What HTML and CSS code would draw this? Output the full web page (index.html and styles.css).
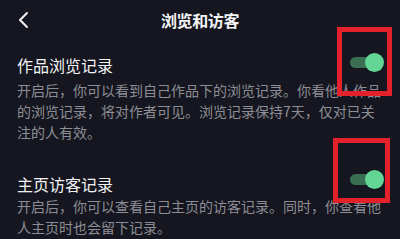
FILE: index.html
```html
<!DOCTYPE html>
<html lang="zh-CN">
<head>
<meta charset="utf-8">
<title>浏览和访客</title>
<link rel="stylesheet" href="styles.css">
</head>
<body>
<div class="page">
  <header class="header">
    <svg class="back" width="12" height="18" viewBox="0 0 12 18"><path d="M10 2 L3 9 L10 16" fill="none" stroke="#f2f2f2" stroke-width="2" stroke-linecap="round" stroke-linejoin="round"/></svg>
    <div class="title">浏览和访客</div>
    <div class="spacer"></div>
  </header>
  <section class="section first">
    <div class="row">
      <div class="label">作品浏览记录</div>
      <div class="toggle"><span class="track"></span><span class="knob"></span></div>
    </div>
    <p class="desc">开启后，你可以看到自己作品下的浏览记录。你看他人作品的浏览记录，将对作者可见。浏览记录保持7天，仅对已关注的人有效。</p>
  </section>
  <section class="section second">
    <div class="row">
      <div class="label">主页访客记录</div>
      <div class="toggle up"><span class="track"></span><span class="knob"></span></div>
    </div>
    <p class="desc tight">开启后，你可以查看自己主页的访客记录。同时，你查看他人主页时也会留下记录。</p>
  </section>
  <div class="mark mark-one"></div>
  <div class="mark mark-two"></div>
</div>
</body>
</html>
```
FILE: styles.css
```css
* { box-sizing: border-box; }
html, body { margin: 0; padding: 0; }
body {
  background: #15161f;
  font-family: "Noto Sans CJK SC", "Noto Sans", sans-serif;
  color: #f0f0f2;
  overflow: hidden;
}
.page {
  position: relative;
  width: 400px;
  height: 239px;
  overflow: hidden;
}
.header {
  height: 40px;
  display: grid;
  grid-template-columns: 60px 1fr 60px;
  align-items: center;
}
.back { margin-left: 17px; margin-top: -1px; }
.title {
  text-align: center;
  font-size: 16px;
  font-weight: 700;
  color: #f4f4f6;
  letter-spacing: -0.4px;
}
.section { padding: 0 16px 0 17px; }
.first { padding-top: 11px; }
.second { padding-top: 27px; }
.row {
  height: 28px;
  display: flex;
  align-items: center;
  justify-content: space-between;
}
.label {
  font-size: 16px;
  line-height: 28px;
  color: #f2f2f4;
}
.toggle {
  position: relative;
  width: 34px;
  height: 19px;
  margin-bottom: 6px;
}
.toggle.up { margin-bottom: 10px; }
.track {
  position: absolute;
  left: 0;
  top: 4px;
  width: 28px;
  height: 11px;
  border-radius: 6px;
  background: #3b6f53;
}
.knob {
  position: absolute;
  right: 0;
  top: 0;
  width: 19px;
  height: 19px;
  border-radius: 50%;
  background: #63d594;
}
.desc {
  margin: 1px 0 0;
  font-size: 14px;
  line-height: 21px;
  color: #8d8e95;
}
.desc.tight { margin-top: -2px; }
.mark {
  position: absolute;
  border: 5px solid #e3212b;
}
.mark-one { left: 337px; top: 27px; width: 55px; height: 69px; }
.mark-two { left: 333px; top: 138px; width: 57px; height: 65px; }
```
